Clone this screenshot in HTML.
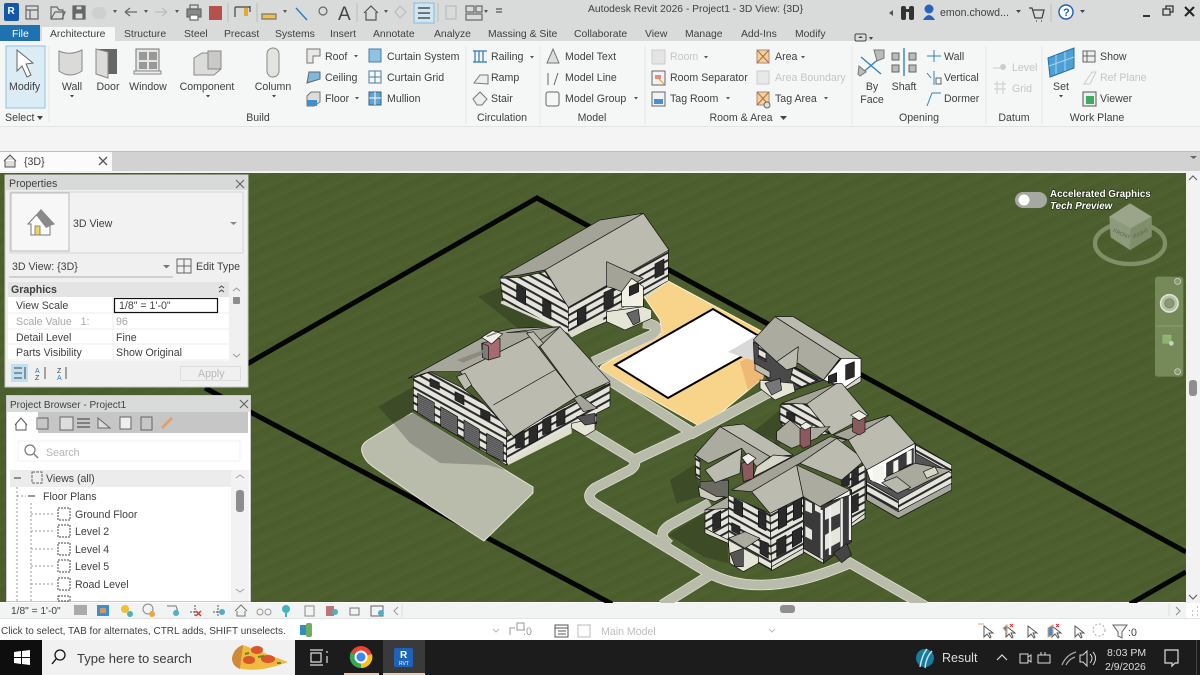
<!DOCTYPE html>
<html><head><meta charset="utf-8"><style>
html,body{margin:0;padding:0;width:1200px;height:675px;overflow:hidden;background:#fff}
svg{display:block;filter:blur(.3px)}
text{font-family:"Liberation Sans",sans-serif;font-size:10.6px;fill:#404040}
.g text,text.g{fill:#c4c6c6}
.ic{fill:none;stroke:#666;stroke-width:1.2}
</style></head><body>
<svg width="1200" height="675" viewBox="0 0 1200 675" xmlns="http://www.w3.org/2000/svg">
<defs>
<pattern id="sL" width="40" height="23" patternUnits="userSpaceOnUse" patternTransform="skewY(29)"><rect width="40" height="23" fill="#e4e4dc"/><rect width="40" height="7" fill="#2a2a2a"/></pattern>
<pattern id="sR" width="40" height="23" patternUnits="userSpaceOnUse" patternTransform="skewY(-29)"><rect width="40" height="23" fill="#e4e4dc"/><rect width="40" height="7" fill="#2a2a2a"/></pattern>
<pattern id="gd" width="6" height="6" patternUnits="userSpaceOnUse" patternTransform="skewY(29)"><rect width="6" height="6" fill="#4a4a4a"/><rect width="3" height="3" fill="#777"/><rect x="3" y="3" width="3" height="3" fill="#777"/></pattern>
<pattern id="gr" width="120" height="14" patternUnits="userSpaceOnUse" patternTransform="skewY(-24)"><rect width="120" height="14" fill="#4d5f2f"/><rect y="0" width="120" height="5" fill="#4b5d2d"/><rect y="10" width="120" height="2" fill="#4f6131"/></pattern>
<filter id="sc" color-interpolation-filters="sRGB"><feGaussianBlur stdDeviation=".35"/></filter>
</defs>

<!-- chrome backgrounds -->
<rect width="1200" height="41" fill="#d9dbdb"/>
<rect y="41" width="1200" height="85" fill="#f5f6f6"/>
<rect y="126" width="1200" height="25" fill="#f4f4f4"/>
<rect y="126" width="1200" height="1" fill="#e3e4e4"/>
<rect y="151" width="1200" height="21" fill="#d2d2d2"/>
<rect y="151" width="1200" height="1" fill="#bdbdbd"/>
<rect y="152" width="112" height="20" fill="#fbfbfb"/>

<!-- canvas -->
<rect y="172" width="1186" height="430" fill="url(#gr)"/>
<rect y="171" width="1200" height="2" fill="#f2f2f2"/>

<g filter="url(#sc)">
<!-- property line -->
<g fill="none" stroke="#050505" stroke-width="5">
<path d="M205 388 L537 198 L1186 552"/>
<path d="M205 388 L612 604"/>
<path d="M1130 604 L1186 572"/>
</g>

<!-- pad -->
<path d="M602 365 L662 333 L660 320 L645 298 L668 281 L763 332 L763 378 L706 425 Q700 427 694 423 L604 372 Q598 368 602 365Z" fill="#f7d48a" stroke="#fff3d0" stroke-width="1"/>
<path d="M740 362 L763 350 L763 378 L748 390Z" fill="#eeb877"/>
<path d="M615 365 L713 309 L757 335 L757 348 L668 398Z" fill="#fff" stroke="#000" stroke-width="2"/>
<path d="M728 352 L757 335 L775 340 L757 362Z" fill="#d9d9d9"/>

<!-- driveway and roads -->
<path d="M362 452 Q360 445 368 440 L412 413 L533 487 L533 493 L484 541 L430 506 L372 466 Q364 460 362 452Z" fill="#b9bbab" stroke="#e4e6d8" stroke-width="1"/>
<path d="M393 423 L413 413 L505 470 L488 465 L440 463 L410 443Z" fill="#939589"/>
<g fill="none" stroke="#e2e4d6" stroke-width="10.500">
<path d="M643 323 Q664 325 652 335 L593 362"/>
<path d="M590 368 L693 433 L770 392"/>
<path d="M582 428 L630 457 Q640 463 630 470 L595 488 Q583 497 597 505 L707 572 Q760 602 850 563 L925 606"/>
<path d="M630 462 L692 433"/>
<path d="M710 503 L670 525 Q655 535 670 545"/>
<path d="M710 575 L662 605"/>
</g>
<g fill="none" stroke="#babcab" stroke-width="9">
<path d="M643 323 Q664 325 652 335 L593 362"/>
<path d="M590 368 L693 433 L770 392"/>
<path d="M582 428 L630 457 Q640 463 630 470 L595 488 Q583 497 597 505 L707 572 Q760 602 850 563 L925 606"/>
<path d="M630 462 L692 433"/>
<path d="M710 503 L670 525 Q655 535 670 545"/>
<path d="M710 575 L662 605"/>
</g>

<!-- houses 1 and 2, crop coordinates -->
<g transform="translate(350 190) scale(.33333)" stroke="#111" stroke-width="2" stroke-linejoin="round">
<path d="M385 320 L455 290 L600 410 L510 420Z" fill="#3d4b26" stroke="none"/>
<path d="M85 650 L190 590 L190 665 L130 700Z" fill="#3d4b26" stroke="none"/>
<!-- house 1 -->
<path d="M450 265 L510 262 L585 245 L655 350 L655 430 L460 340Z" fill="url(#sL)"/>
<path d="M655 350 L955 180 L955 272 L880 315 L880 350 L770 365 L770 395 L665 440 L655 430Z" fill="url(#sR)"/>
<path d="M452 340 L655 430 L665 442 L760 395 L760 375 L880 350 L880 320 L955 272 L955 270 L900 318 L655 425 L455 332Z" fill="#dcdccb" stroke="none"/>
<path d="M450 262 L750 90 L880 70 L585 240 L510 255Z" fill="#a3a497"/>
<path d="M585 240 L880 70 L957 180 L655 352Z" fill="#bbbcaf"/>
<path d="M770 215 L880 265 L815 305 L790 295 L770 290Z" fill="#a3a497"/>
<path d="M815 305 L845 265 L880 290 L880 350 L815 350Z" fill="#f1f1e4"/>
<path d="M770 365 L880 350 L905 360 L905 385 L825 420 L770 395Z" fill="#e4e5d4"/>
<path d="M830 370 L865 358 L870 395 L850 405Z" fill="#666"/>
<path d="M500 285 L527 300 L527 345 L500 330ZM578 325 L603 340 L603 388 L578 375ZM682 360 L708 345 L708 390 L682 405ZM762 308 L790 295 L790 345 L762 358ZM838 290 L866 278 L866 305 L838 318ZM915 222 L942 207 L942 252 L915 265Z" fill="#2a2a2a"/>
<!-- house 2 -->
<path d="M190 565 L240 545 L330 590 L400 640 L470 710 L470 825 L190 660Z" fill="url(#sL)"/>
<path d="M470 740 L780 580 L780 650 L740 670 L740 700 L665 710 L470 825Z" fill="url(#sR)"/>
<path d="M470 815 L665 705 L665 730 L475 825Z" fill="#dedfce" stroke="none"/>
<path d="M203 610 L253 638 L253 700 L203 668ZM272 650 L323 680 L323 738 L272 708ZM342 690 L388 718 L388 778 L342 750ZM410 730 L460 758 L460 815 L410 790Z" fill="url(#gd)"/>
<path d="M240 565 L268 578 L268 600 L240 588ZM315 605 L342 618 L342 645 L315 630ZM392 655 L420 668 L420 692 L392 678ZM497 735 L523 722 L523 770 L497 775ZM537 715 L563 702 L563 750 L537 765ZM578 690 L603 677 L603 725 L578 735ZM620 668 L645 655 L645 700 L620 710Z" fill="#2a2a2a"/>
<path d="M175 565 L420 430 L490 415 L630 410 L575 470 L540 440 L330 545 L240 545Z" fill="#a6a79a"/>
<path d="M470 428 L630 410 L570 450 L530 425Z" fill="#abac9f"/>
<path d="M330 545 L540 440 L680 620 L490 740 Z" fill="#bbbcaf"/>
<path d="M430 645 L615 540" fill="none"/>
<path d="M570 470 L630 410 L780 575 L680 620Z" fill="#bbbcaf"/>
<path d="M320 560 L345 550 L365 585 L345 600Z" fill="#bbbcaf"/>
<path d="M530 430 L550 425 L580 460 L565 472Z" fill="#bbbcaf"/>
<path d="M672 625 L690 615 L742 655 L700 665Z" fill="#a3a497"/>
<path d="M665 700 L735 685 L735 720 L705 738 L665 715Z" fill="#e4e5d4"/>
<path d="M680 680 L735 670 L735 700 L705 705Z" fill="#555"/>
<path d="M395 460 L450 445 L450 500 L415 510 L397 500Z" fill="#a76b6f"/>
<path d="M397 460 L397 502 L415 510 L415 468Z" fill="#7d7c78"/>
<path d="M395 442 L428 422 L458 432 L425 462Z" fill="#efefe7"/>
<path d="M410 440 L440 428" stroke-width="4" stroke="#777"/>
<path d="M320 510 L400 480 L395 495 L340 518Z" fill="#8b8c80" stroke="none"/>
</g>

<!-- house 3,4,5 -->
<g transform="translate(660 300) scale(.33333)" stroke="#111" stroke-width="2" stroke-linejoin="round">
<path d="M280 395 L360 330 L390 410 L350 440 L340 420Z" fill="#3d4b26" stroke="none"/>
<path d="M30 540 L110 490 L120 590 L50 610Z" fill="#3d4b26" stroke="none"/>
<path d="M25 705 L130 640 L200 700 L205 790 L130 770Z" fill="#3d4b26" stroke="none"/>
<!-- house 3 -->
<path d="M280 125 L400 200 L490 240 L405 270 L345 262 L283 190Z" fill="#4a4a4a"/>
<path d="M285 190 L330 215 L330 235 L285 210Z" fill="#bcbcb0"/>
<path d="M295 135 L318 148 L318 185 L295 172ZM400 200 L475 240 L420 262 L390 240Z" fill="url(#sL)"/>
<path d="M490 240 L545 175 L603 175 L603 238 L560 265Z" fill="#fff"/>
<path d="M557 195 L583 185 L583 230 L557 240ZM505 228 L530 218 L530 245 L505 250Z" fill="#2a2a2a"/>
<path d="M555 262 L603 228 L603 245 L562 268Z" fill="#d6d7c8"/>
<path d="M300 240 L400 250 L405 275 L345 300 L300 265Z" fill="#e4e5d4"/>
<path d="M315 250 L360 235 L365 270 L335 285Z" fill="#777"/>
<path d="M280 120 L345 50 L540 175 L490 240 L415 190 L350 185 Z" fill="#abac9f"/>
<path d="M345 50 L400 50 L603 175 L540 175Z" fill="#bbbcaf"/>
<path d="M350 185 L415 140 L410 200 L380 210Z" fill="#bbbcaf"/>
<!-- house 4 -->
<path d="M360 315 L440 308 L510 400 L400 420 L360 365Z" fill="url(#sL)"/>
<path d="M380 335 L405 345 L405 365 L380 355Z" fill="#2a2a2a"/>
<path d="M365 310 L530 250 L445 312Z" fill="#a3a497"/>
<path d="M440 312 L530 250 L545 250 L625 345 L515 405Z" fill="#bbbcaf"/>
<path d="M350 395 L390 360 L420 385 L510 380 L470 415 L395 445 L350 420Z" fill="#abac9f"/>
<!-- left wing -->
<path d="M105 465 L120 480 L120 540 L108 530Z" fill="url(#sL)"/>
<path d="M120 545 L205 540 L205 590 L170 600 L120 570Z" fill="#6a6a62"/>
<path d="M180 380 L250 372 L400 465 L330 470Z" fill="#bbbcaf"/>
<path d="M105 465 L180 380 L330 470 L290 500 L245 445 L145 490Z" fill="#abac9f"/>
<path d="M135 510 L245 445 L240 520 L165 548Z" fill="#bbbcaf"/>
<path d="M290 500 L340 465 L395 470 L320 510 L280 530Z" fill="#d6d6c9"/>
<path d="M245 490 L280 480 L280 535 L250 545Z" fill="#8a5a5e"/>
<path d="M245 472 L265 460 L288 475 L262 495Z" fill="#efefe7"/>
<path d="M115 560 L170 590 L195 590 L165 605 L120 590Z" fill="#c9caba"/>
<!-- main house walls -->
<path d="M135 630 L205 590 L205 720 L135 685Z" fill="url(#sR)"/>
<path d="M135 685 L205 720 L205 730 L135 700Z" fill="#dbdccb"/>
<path d="M205 585 L330 640 L335 810 L205 740Z" fill="url(#sL)"/>
<path d="M330 640 L430 590 L430 750 L335 810Z" fill="url(#sR)"/>
<path d="M430 590 L575 570 L575 725 L490 790 L430 750Z" fill="#3a3a3a"/>
<path d="M436 600 L456 610 L456 640 L436 632ZM436 678 L456 690 L456 720 L436 710ZM495 625 L540 600 L540 640 L495 660ZM495 705 L540 680 L540 725 L495 750ZM465 612 L482 622 L482 640 L465 632Z" stroke="none" fill="#e6e6df"/>
<path d="M485 630 L485 785M510 620 L510 765M545 595 L545 745M570 585 L570 720" stroke="#eee" stroke-width="7" fill="none"/>
<path d="M540 540 L615 490 L615 640 L575 670 L575 570Z" fill="url(#sR)"/>
<path d="M222 595 L248 608 L248 652 L222 638ZM295 632 L318 644 L318 692 L295 680ZM355 628 L380 615 L380 675 L355 688ZM400 605 L425 592 L425 650 L400 662ZM158 645 L182 632 L182 680 L158 692ZM300 720 L325 730 L325 775 L300 760ZM350 720 L378 705 L378 755 L350 770ZM397 695 L425 680 L425 725 L397 742ZM215 668 L240 680 L240 705 L215 692ZM545 520 L568 505 L568 555 L545 560ZM575 510 L595 498 L595 550 L575 560ZM575 590 L595 580 L595 630 L575 640Z" fill="#2a2a2a"/>
<path d="M335 800 L430 745 L430 760 L335 812ZM430 745 L490 780 L490 790 L430 755ZM575 670 L615 640 L615 655 L575 680Z" fill="#dbdccb"/>
<path d="M205 720 L295 770 L295 790 L250 815 L210 790Z" fill="#e4e5d4"/>
<path d="M205 715 L255 695 L300 715 L255 745Z" fill="#abac9f"/>
<path d="M210 760 L250 745 L250 800 L225 800Z" fill="#555"/>
<path d="M520 760 L560 730 L575 765 L545 788Z" fill="#444"/>
<path d="M135 630 L205 590 L205 625Z" fill="#abac9f"/>
<!-- main roofs -->
<path d="M215 570 L510 410 L560 420 L420 490 L275 575Z" fill="#a3a497"/>
<path d="M275 575 L410 495 L430 590 L330 640Z" fill="#bbbcaf"/>
<path d="M410 495 L570 570 L480 620 L430 590Z" fill="#abac9f"/>
<path d="M500 610 L570 570 L570 585 L510 605Z" fill="#f4f4ee"/>
<path d="M420 490 L530 415 L615 480 L545 540Z" fill="#bbbcaf"/>
<path d="M565 420 L690 345 L765 430 L620 510Z" fill="#bbbcaf"/>
<path d="M520 405 L590 375 L690 345 L565 420Z" fill="#a3a497"/>
<!-- chimneys -->
<path d="M420 385 L452 378 L452 435 L430 445 L420 435Z" fill="#8a5a5e"/>
<path d="M420 378 L438 366 L458 378 L435 390Z" fill="#efefe7"/>
<path d="M578 355 L615 350 L615 395 L598 405 L578 395Z" fill="#8a5a5e"/>
<path d="M572 345 L597 332 L622 348 L597 362Z" fill="#efefe7"/>
<!-- deck -->
<path d="M620 510 L765 430 L875 495 L875 570 L715 655 L620 600Z" fill="#555"/>
<path d="M620 545 L715 600 L875 510 L875 570 L715 655 L620 600Z" fill="url(#sR)"/>
<path d="M620 545 L715 600 L715 655 L620 600Z" fill="url(#sL)"/>
<path d="M767 435 L875 495 L875 520 L767 460Z" fill="url(#sL)"/>
<path d="M620 510 L765 430 L765 490 L715 578 L630 540Z" fill="#fff"/>
<path d="M680 490 L760 445 L760 490 L680 530Z" fill="#3a3a3a"/>
<path d="M700 485 L715 478 L715 520 L700 525ZM740 455 L755 450 L755 490 L740 495ZM638 505 L672 495 L672 540 L638 545Z" fill="#f4f4ee" stroke="none"/>
<path d="M680 530 L765 490 L875 510 L800 545 L750 570 L672 540Z" fill="#aaa99e"/>
<path d="M665 548 L710 530 L752 562 L712 580Z" fill="#b8b9ad"/>
<path d="M790 515 L825 500 L835 520 L800 535Z" fill="#d7d7c6"/>
<path d="M620 600 L715 655 L875 570 L875 550 L715 635 L620 580Z" fill="#a7a89c"/>
</g>
</g>

<!-- view cube etc -->
<g transform="translate(980 160) scale(.33333)">
<ellipse cx="450" cy="250" rx="105" ry="62" fill="none" stroke="#7f9066" stroke-width="13"/>
<path d="M388 170 L450 130 L515 170 L515 230 L450 270 L392 232Z" fill="#8d9a7b"/>
<path d="M388 170 L450 130 L515 170 L452 205Z" fill="#9aa58a"/>
<path d="M452 205 L515 170 L515 230 L450 270Z" fill="#808e6c"/>
<text x="398" y="215" style="font-size:16px;fill:#5c6a49" transform="rotate(25 398 215)">FRONT</text>
<text x="462" y="235" style="font-size:16px;fill:#5c6a49" transform="rotate(-25 462 235)">RIGHT</text>
<path d="M525 360 Q525 350 535 350 L600 350 Q610 350 610 360 L610 640 Q610 650 600 650 L535 650 Q525 650 525 640Z" fill="#768958"/>
<path d="M527 498 L608 498" stroke="#8d9e74" stroke-width="3"/>
<circle cx="568" cy="430" r="26" fill="#b6bfa8" stroke="#dfe3d6" stroke-width="5"/>
<circle cx="568" cy="430" r="14" fill="#8a9a72" stroke="#6d7d58" stroke-width="2"/>
<rect x="548" y="525" width="25" height="25" fill="#90b470" stroke="#a8c294"/>
<circle cx="574" cy="550" r="7" fill="#c7d7b7"/>
<circle cx="593" cy="364" r="9" fill="#8a9a72" stroke="#e0e0d4" stroke-width="2"/>
<circle cx="593" cy="635" r="9" fill="#8a9a72" stroke="#e0e0d4" stroke-width="2"/>
</g>
<rect x="1015" y="192" width="32" height="16" rx="8" fill="#a5a8a3"/>
<circle cx="1024" cy="200" r="5.5" fill="#fff"/>
<g stroke="#263015" stroke-width="1.4"><text x="1050" y="197" style="font-size:9.8px;font-weight:bold;fill:#fff;paint-order:stroke">Accelerated Graphics</text>
<text x="1050" y="209" style="font-size:9.8px;font-weight:bold;font-style:italic;fill:#fff;paint-order:stroke">Tech Preview</text></g>

<!-- right scrollbar -->
<rect x="1186" y="172" width="14" height="431" fill="#f2f2f2"/>
<path d="M1189 180 L1193 176 L1197 180" class="ic" stroke-width="1"/>
<path d="M1189 595 L1193 599 L1197 595" class="ic"/>
<rect x="1189" y="380" width="8" height="16" rx="3" fill="#8f8f8f"/>

<!-- title bar -->
<rect x="4" y="3" width="15" height="18" rx="2" fill="#1257a8"/>
<text x="7.5" y="14" style="font-size:10px;font-weight:bold;fill:#fff">R</text>
<g class="ic" fill="none" stroke="#555">
<rect x="26" y="6" width="12" height="13"/><path d="M26 10 H38M30 10 V19"/>
<path d="M51 19 L51 7 H57 L59 10 H63 V19Z M51 19 L55 12 H65 L62 19"/>
<rect x="73" y="6" width="12" height="13" fill="#666"/><rect x="76" y="6" width="6" height="4" fill="#ddd"/><rect x="75" y="13" width="8" height="6" fill="#ddd"/>
<path d="M125 12 H137 M125 12 L130 8 M125 12 L130 16" />
<path d="M155 12 H167 M167 12 L162 8 M167 12 L162 16" stroke="#bbb"/>
<rect x="187" y="9" width="14" height="8" fill="#888"/><rect x="190" y="5" width="8" height="4"/><rect x="190" y="15" width="8" height="5" fill="#fff"/>
<path d="M235 7 V17 M235 7 H250 M250 6 V12" stroke="#444"/>
<path d="M262 14 H276 V19 H262Z" fill="#f0c040" stroke="#777"/>
<path d="M296 8 L307 20" stroke="#2d80c0" stroke-width="1.5"/>
<circle cx="323" cy="11" r="4"/>
<path d="M364 13 L371 6 L378 13 M366 12 V20 H376 V12" stroke="#555"/>
<path d="M400 6 L406 12 L400 18 L395 12Z" stroke="#bbb"/>
<rect x="414" y="3" width="20" height="20" fill="#cfe5f2" stroke="#8fc3df"/>
<path d="M418 8 H430 M418 13 H430 M418 18 H430" stroke="#333"/>
<rect x="446" y="6" width="10" height="13" stroke="#bbb"/>
<rect x="466" y="6" width="8" height="6"/><rect x="476" y="6" width="6" height="6"/><rect x="466" y="14" width="16" height="6"/>
<path d="M496 9 H502 M496 12 H502" stroke="#555"/>
</g>
<rect x="209" y="6" width="13" height="14" fill="#b5524e"/>
<rect x="244" y="8" width="4" height="8" fill="#e6a82c"/>
<rect x="92" y="7" width="14" height="12" rx="5" fill="#cfcfcf"/>
<text x="338" y="20" style="font-size:19px;fill:#444">A</text>
<path d="M113 10 l4 0 l-2 3z M144 10 l4 0 l-2 3z M175 10 l4 0 l-2 3z M283 10 l4 0 l-2 3z M384 10 l4 0 l-2 3z M484 10 l4 0 l-2 3z" fill="#555"/>
<path d="M228 3 V22 M257 3 V22 M357 3 V22 M438 3 V22" stroke="#bbb"/>
<text x="588" y="12" style="font-size:10.3px">Autodesk Revit 2026 - Project1 - 3D View: {3D}</text>
<path d="M893 10 L889 13 L893 16Z" fill="#555"/>
<g fill="#333"><rect x="901" y="6" width="5" height="14" rx="2"/><rect x="909" y="6" width="5" height="14" rx="2"/><rect x="905" y="9" width="5" height="3"/></g>
<circle cx="929" cy="9" r="4.5" fill="#2b63b8"/><path d="M923 20 Q929 10 935 20Z" fill="#2b63b8"/>
<text x="940" y="16">emon.chowd...</text>
<path d="M1016 10 l5 0 l-2.5 3z M1080 10 l5 0 l-2.5 3z" fill="#444"/>
<path d="M1029 8 H1032 L1035 18 H1042 L1044 10 H1033 M1036 21 h1 M1041 21 h1" fill="none" stroke="#444" stroke-width="1.3"/>
<circle cx="1066" cy="12" r="7" fill="#fff" stroke="#1e5fb4" stroke-width="1.4"/>
<text x="1063" y="16" style="font-size:11px;font-weight:bold;fill:#1e5fb4">?</text>
<path d="M1051 4 V22" stroke="#bbb"/>
<rect x="1143" y="15" width="7" height="2" fill="#333"/>
<path d="M1163 9 H1170 V15 H1163Z M1166 9 V6 H1173 V12 H1170" fill="none" stroke="#333" stroke-width="1.3"/>
<path d="M1185 7 L1194 16 M1194 7 L1185 16" stroke="#222" stroke-width="2"/>

<!-- tabs -->
<rect x="0" y="25" width="40" height="16" fill="#1f71b0"/>
<text x="12" y="37" style="fill:#fff;font-size:10.4px">File</text>
<rect x="42" y="27" width="73" height="15" fill="#f5f6f6"/>
<text x="50" y="37" style="font-size:10.4px">Architecture</text><text x="124" y="37" style="font-size:10.4px">Structure</text><text x="184" y="37" style="font-size:10.4px">Steel</text><text x="224" y="37" style="font-size:10.4px">Precast</text><text x="275" y="37" style="font-size:10.4px">Systems</text><text x="330" y="37" style="font-size:10.4px">Insert</text><text x="373" y="37" style="font-size:10.4px">Annotate</text><text x="434" y="37" style="font-size:10.4px">Analyze</text><text x="488" y="37" style="font-size:10.4px">Massing &amp; Site</text><text x="574" y="37" style="font-size:10.4px">Collaborate</text><text x="645" y="37" style="font-size:10.4px">View</text><text x="685" y="37" style="font-size:10.4px">Manage</text><text x="741" y="37" style="font-size:10.4px">Add-Ins</text><text x="795" y="37" style="font-size:10.4px">Modify</text>
<rect x="855" y="34" width="11" height="7" rx="1.5" fill="none" stroke="#444"/><path d="M858 38 h5 l-2.5 -2z M869 37 l4 0 l-2 3z" fill="#444"/>

<!-- ribbon separators -->
<path d="M49 46 V122 M466 46 V125 M540 46 V125 M645 46 V125 M852 46 V125 M986 46 V125 M1042 46 V125" stroke="#e6e7e7"/>
<rect x="6" y="46" width="39" height="62" fill="#dcecf5" stroke="#8fc3df"/>
<path d="M17 50 L17 71 L22 66 L27 77 L31 75 L26 64 L33 63Z" fill="#fdfdfd" stroke="#666"/>
<!-- big buttons -->
<path d="M59 51 Q70 56 82 50 V71 Q70 79 59 71Z" fill="#dadbd7" stroke="#888"/>
<path d="M97 49 H117 V74 H97Z" fill="#666"/><path d="M96 49 L108 52 V78 L96 74Z" fill="#dcdcd8" stroke="#888"/>
<rect x="136" y="49" width="23" height="22" fill="#e5e5e2" stroke="#777"/><rect x="139" y="52" width="8" height="8" fill="#999"/><rect x="149" y="52" width="8" height="8" fill="#999"/><rect x="139" y="62" width="8" height="7" fill="#999"/><rect x="149" y="62" width="8" height="7" fill="#999"/><rect x="134" y="71" width="27" height="3" fill="#eee" stroke="#888"/>
<path d="M194 58 L202 53 H221 V69 L214 75 H194Z" fill="#dcdcd8" stroke="#888"/><path d="M208 51 H221 V69 H208Z" fill="#c9c9c5" stroke="#888"/>
<rect x="267" y="48" width="12" height="29" rx="6" fill="#e3e3e0" stroke="#888"/>
<text x="9" y="90">Modify</text>
<g text-anchor="middle"><text x="72" y="90">Wall</text><text x="108" y="90">Door</text><text x="148" y="90">Window</text><text x="207" y="90">Component</text><text x="273" y="90">Column</text><text x="872" y="90">By</text><text x="872" y="103">Face</text><text x="904" y="90">Shaft</text><text x="1061" y="90">Set</text></g>
<path d="M70 95 h4 l-2 2.5z M206 95 h4 l-2 2.5z M272 95 h4 l-2 2.5z M1059 95 h4 l-2 2.5z" fill="#444"/>
<!-- labels -->
<text x="325" y="60">Roof</text><text x="325" y="81">Ceiling</text><text x="325" y="102">Floor</text>
<text x="387" y="60">Curtain System</text><text x="387" y="81">Curtain Grid</text><text x="387" y="102">Mullion</text>
<text x="491" y="60">Railing</text><text x="491" y="81">Ramp</text><text x="491" y="102">Stair</text>
<text x="565" y="60">Model Text</text><text x="565" y="81">Model Line</text><text x="565" y="102">Model Group</text>
<text x="670" y="60" class="g">Room</text><text x="670" y="81">Room Separator</text><text x="670" y="102">Tag Room</text>
<text x="775" y="60">Area</text><text x="775" y="81" class="g">Area Boundary</text><text x="775" y="102">Tag Area</text>
<text x="944" y="60">Wall</text><text x="944" y="81">Vertical</text><text x="944" y="102">Dormer</text>
<text x="1012" y="71" class="g">Level</text><text x="1012" y="92" class="g">Grid</text>
<text x="1100" y="60">Show</text><text x="1100" y="81" class="g">Ref Plane</text><text x="1100" y="102">Viewer</text>
<path d="M354 55 h4 l-2 2.5z M355 97 h4 l-2 2.5z M530 56 h4 l-2 2.5z M634 97 h4 l-2 2.5z M704 56 h4 l-2 2.5z M726 97 h4 l-2 2.5z M801 56 h4 l-2 2.5z M824 97 h4 l-2 2.5z" fill="#555"/>
<!-- small icons -->
<path d="M307 63 V49 H320 L320 56 H313 V63Z" fill="#e8e8e4" stroke="#777"/>
<path d="M307 83 L309 72 H320 V79Z" fill="#7fb8de" stroke="#666"/>
<path d="M307 106 V96 L311 92 H320 V102 L314 106Z" fill="#dcdcd8" stroke="#777"/><rect x="307" y="100" width="10" height="6" fill="#3f8fd0"/>
<rect x="369" y="49" width="12" height="13" fill="#8fc2e3" stroke="#4d7ea0"/>
<path d="M369 71 H381 V83 H369Z M375 71 V83 M369 77 H381" fill="none" stroke="#4d7ea0"/>
<rect x="369" y="92" width="12" height="13" fill="#5fa6d6" stroke="#335f80"/><path d="M375 92 V105 M369 98 H381" stroke="#fff"/>
<path d="M473 51 H487 M475 51 V62 M479 51 V62 M483 51 V62 M473 62 H487" stroke="#2e78b8" stroke-width="1.2" fill="none"/>
<path d="M474 83 L480 75 H488 V84Z" fill="#eee" stroke="#777"/>
<path d="M473 99 L480 92 L487 99 L482 105 H477Z" fill="#eee" stroke="#777"/>
<path d="M547 63 L553 49 L559 63Z" fill="#ddd" stroke="#777"/>
<path d="M548 73 V85 M558 73 L554 85" stroke="#666" fill="none"/>
<rect x="546" y="92" width="13" height="14" rx="2" fill="none" stroke="#666"/>
<rect x="652" y="50" width="13" height="14" fill="#e4e4e4" stroke="#ccc"/>
<rect x="652" y="71" width="13" height="14" fill="#f2f2f2" stroke="#666"/><path d="M655 75 h6 v4 h-6z" fill="#e88"/><path d="M658 78 l6 6" stroke="#e8a020"/>
<rect x="652" y="92" width="13" height="14" fill="#f2f2f2" stroke="#666"/><rect x="654" y="99" width="9" height="5" fill="#4a90c8"/>
<rect x="757" y="50" width="12" height="13" fill="#f6d28d" stroke="#a88"/><path d="M757 50 L769 63 M769 50 L757 63" stroke="#a66"/>
<rect x="757" y="71" width="12" height="13" fill="#e8e8e8" stroke="#ccc"/>
<rect x="757" y="92" width="12" height="13" fill="#f6d28d" stroke="#a88"/><path d="M757 92 L769 105 M769 92 L757 105" stroke="#a66"/><circle cx="767" cy="105" r="3" fill="#ddd" stroke="#666"/>
<path d="M861 57 L881 74 M861 74 L881 57" stroke="#2e85c0" stroke-width="1.4"/>
<path d="M859 66 L866 72 L860 76 L858 74Z M874 50 L884 50 L884 58 L877 61Z" fill="#bbb" stroke="#777"/>
<path d="M904 48 V76" stroke="#2e85c0" stroke-width="1.4"/>
<g fill="#bbb" stroke="#666"><rect x="892" y="53" width="7" height="7"/><rect x="909" y="53" width="7" height="7"/><rect x="892" y="65" width="7" height="7"/><rect x="909" y="65" width="7" height="7"/></g>
<path d="M927 56 H941 M934 50 V62" stroke="#2e85c0" fill="none"/>
<path d="M927 73 L931 78 M934 71 V85" stroke="#2e85c0" fill="none"/><rect x="936" y="78" width="5" height="6" fill="none" stroke="#666"/>
<path d="M927 106 L932 93 H941" stroke="#2e85c0" fill="none"/>
<path d="M993 68 H1000" stroke="#ccc"/><circle cx="1003" cy="67" r="3" fill="#ccc"/>
<path d="M994 84 H1006 M994 89 H1006 M997 81 V94 M1003 81 V94" stroke="#ccc" fill="none"/>
<path d="M1048 58 L1074 48 V68 L1050 77Z" fill="#4da0d6" stroke="#2970a0"/>
<path d="M1056 55 V74 M1065 52 V71 M1049 66 L1074 57" stroke="#a6d3ee" fill="none"/>
<path d="M1083 51 H1095 V62 H1083Z M1087 51 V62 M1083 56 H1095" fill="#eee" stroke="#666"/>
<path d="M1084 84 L1092 72 H1096 L1090 84Z" fill="none" stroke="#ccc"/>
<rect x="1083" y="92" width="13" height="14" fill="#eee" stroke="#555"/><rect x="1086" y="96" width="8" height="8" fill="#3faa60"/>
<!-- panel labels -->
<text x="5" y="121">Select</text><path d="M37 116 h6 l-3 4z" fill="#444"/>
<g text-anchor="middle"><text x="258" y="121">Build</text><text x="502" y="121">Circulation</text><text x="592" y="121">Model</text><text x="741" y="121">Room &amp; Area</text><text x="919" y="121">Opening</text><text x="1014" y="121">Datum</text><text x="1097" y="121">Work Plane</text></g>
<path d="M780 116 h7 l-3.5 4z" fill="#444"/>
<path d="M1190 156 h7 l-3.5 3z" fill="#666"/>

<!-- view tab -->
<path d="M4 161 L10 155 L16 161 M5 160 V167 H15 V160" fill="#ddd" stroke="#555"/>
<text x="24" y="165">{3D}</text>
<path d="M99 157 L107 165 M107 157 L99 165" stroke="#555" stroke-width="1.3"/>

<!-- properties -->
<rect x="5" y="175" width="243" height="212" fill="#f0f0f0" stroke="#c9c9c9"/>
<rect x="6" y="176" width="241" height="14" fill="#d8dada"/>
<text x="9" y="187">Properties</text>
<path d="M236 180 L244 188 M244 180 L236 188" stroke="#666" stroke-width="1.2"/>
<rect x="10" y="192" width="233" height="61" fill="#f2f2f2" stroke="#d5d5d5"/>
<rect x="11" y="193" width="58" height="58" fill="#f7f7f7" stroke="#bbb"/>
<path d="M28 224 L41 210 L54 224 L50 225 L50 235 L31 235 L31 224Z" fill="#fff" stroke="#777"/>
<path d="M41 209 L54 224 L46 228 L36 215Z" fill="#8a8a8a"/>
<rect x="35" y="226" width="5" height="9" fill="#eed552" stroke="#888"/>
<text x="73" y="227">3D View</text>
<path d="M230 222 h7 l-3.5 3z" fill="#888"/>
<text x="12" y="270">3D View: {3D}</text>
<path d="M163 265 h7 l-3.5 3.5z" fill="#777"/>
<rect x="9" y="276" width="164" height="2" fill="#d0d0d0"/>
<rect x="177" y="259" width="14" height="14" fill="none" stroke="#666"/><path d="M184 259 V273 M177 266 H191" stroke="#666"/>
<text x="196" y="270">Edit Type</text>
<rect x="8" y="282" width="221" height="15" fill="#e4e4e4"/>
<text x="11" y="293" style="font-weight:bold">Graphics</text>
<path d="M219 288 l2.5 -2 l2.5 2 M219 292 l2.5 -2 l2.5 2" fill="none" stroke="#444"/>
<rect x="8" y="297" width="221" height="64" fill="#fff"/>
<path d="M8 313 H229 M8 329 H229 M8 344 H229 M8 360 H229 M113 297 V361" stroke="#ececec"/>
<rect x="114.500" y="298.500" width="103" height="14" fill="#fff" stroke="#111" stroke-width="1.2"/>
<text x="16" y="309">View Scale</text><text x="119" y="309">1/8" = 1'-0"</text>
<text x="16" y="325" style="fill:#a8a8a8">Scale Value&#160;&#160;&#160;1:</text><text x="116" y="325" style="fill:#a8a8a8">96</text>
<text x="16" y="341">Detail Level</text><text x="116" y="341">Fine</text>
<text x="16" y="356">Parts Visibility</text><text x="116" y="356">Show Original</text>
<path d="M233 291 l3.500 -3 l3.500 3 M233 354 l3.500 3 l3.500 -3" fill="none" stroke="#999"/>
<rect x="233" y="297" width="7" height="7" rx="1" fill="#8d8d8d"/>
<rect x="11" y="364" width="17" height="18" fill="#bfe0f0"/>
<path d="M14 368 H22 M14 373 H22 M14 378 H22 M25 367 V379" stroke="#444"/>
<text x="35" y="373" style="font-size:7px;fill:#2e78b8">A</text><text x="35" y="380" style="font-size:7px">Z</text><path d="M45 367 V379" stroke="#555"/>
<text x="57" y="373" style="font-size:7px">Z</text><text x="57" y="380" style="font-size:7px;fill:#2e78b8">A</text><path d="M66 367 V379" stroke="#555"/>
<rect x="180.500" y="366.500" width="60" height="14" rx="1" fill="#f0f0f0" stroke="#dcdcdc"/>
<text x="198" y="377" style="fill:#b9b9b9">Apply</text>

<!-- browser -->
<rect x="6.500" y="395.500" width="244" height="206" fill="#fff" stroke="#c9c9c9"/>
<rect x="7" y="396" width="243" height="16" fill="#d9dbdb"/>
<text x="10" y="408" style="font-size:10px">Project Browser - Project1</text>
<path d="M240 400 L248 408 M248 400 L240 408" stroke="#666" stroke-width="1.2"/>
<rect x="38" y="412" width="210" height="21" fill="#c6c6c6"/>
<path d="M15 425 L21 418 L27 425 M16 424 V430 H26 V424" fill="#fff" stroke="#555"/>
<g fill="none" stroke="#666"><rect x="37" y="418" width="11" height="11"/><rect x="60" y="417" width="13" height="13" fill="#ddd"/><path d="M77 419 H90 M77 423 H90 M77 427 H90" stroke-width="1.5"/><path d="M98 418 L110 428 H98Z" fill="#ddd"/><rect x="120" y="417" width="11" height="12" fill="#eee"/><rect x="141" y="417" width="11" height="13"/></g>
<path d="M162 428 L172 418" stroke="#e4a06a" stroke-width="3"/>
<rect x="18" y="441" width="222" height="20" rx="1" fill="#fff" stroke="#f1f1f1"/>
<circle cx="30" cy="450" r="5" fill="none" stroke="#777" stroke-width="1.2"/><path d="M34 454 L38 458" stroke="#777" stroke-width="1.3"/>
<text x="46" y="456" style="fill:#b5b5b5">Search</text>
<rect x="10" y="470" width="221" height="17" fill="#ececec"/>
<rect x="231" y="470" width="18" height="131" fill="#f2f2f2"/>
<path d="M236 478 l4 -3 l4 3 M236 589 l4 3 l4 -3" fill="none" stroke="#a5a5a5"/>
<rect x="236" y="490" width="8" height="22" rx="3" fill="#8d8d8d"/>
<path d="M14 478 H21 M28 496 H35" stroke="#333"/>
<rect x="32" y="472" width="10" height="11" fill="#eee" stroke="#666" stroke-dasharray="3 1"/>
<text x="46" y="482">Views (all)</text>
<text x="43" y="500">Floor Plans</text>
<path d="M17 487 V601 M31 503 V601 M17 496 H26 M31 514 H53 M31 531 H53 M31 549 H53 M31 566 H53 M31 584 H53" stroke="#999" stroke-dasharray="2 2" fill="none"/>
<g fill="#fff" stroke="#444" stroke-dasharray="2 1"><rect x="58" y="508" width="12" height="12"/><rect x="58" y="525" width="12" height="12"/><rect x="58" y="543" width="12" height="12"/><rect x="58" y="560" width="12" height="12"/><rect x="58" y="578" width="12" height="12"/><rect x="58" y="596" width="12" height="5"/></g>
<text x="75" y="518">Ground Floor</text><text x="75" y="535">Level 2</text><text x="75" y="553">Level 4</text><text x="75" y="570">Level 5</text><text x="75" y="588">Road Level</text>

<!-- bottom view bar -->
<rect y="603" width="1186" height="15" fill="#f2f3f3"/>
<path d="M402 603 V617 M1169 604 V616" stroke="#dcdcdc"/>
<text x="11" y="614" style="font-size:10.2px">1/8" = 1'-0"</text>
<g>
<rect x="74" y="605" width="13" height="10" fill="#aaa"/>
<rect x="97" y="605" width="12" height="11" fill="#3e8fd0"/><rect x="100" y="608" width="6" height="5" fill="#c96"/>
<circle cx="125" cy="609" r="4" fill="#f0c030"/><circle cx="130" cy="614" r="3" fill="#4fb0c0"/>
<circle cx="148" cy="609" r="5" fill="none" stroke="#888"/><circle cx="152" cy="614" r="3" fill="#e9a93a"/>
<path d="M167 606 L176 606 L178 612" stroke="#777" fill="none"/><circle cx="176" cy="613" r="3" fill="#4fb0c0"/>
<path d="M195 605 V616 M190 612 H200" stroke="#555" stroke-dasharray="2 1"/><path d="M196 611 L201 616 M201 611 L196 616" stroke="#d33" stroke-width="1.4"/>
<path d="M218 605 V616 M213 612 H222" stroke="#555" stroke-dasharray="2 1"/><circle cx="222" cy="612" r="3" fill="#4fb0c0"/>
<path d="M235 611 L241 605 L247 611 M237 611 V616 H245 V611" fill="none" stroke="#777"/>
<circle cx="260" cy="612" r="3" fill="none" stroke="#999"/><circle cx="268" cy="612" r="3" fill="none" stroke="#999"/>
<circle cx="286" cy="609" r="4" fill="#3fb5c0"/><rect x="285" y="613" width="2" height="4" fill="#3fb5c0"/>
<rect x="305" y="606" width="9" height="10" fill="none" stroke="#888"/>
<rect x="326" y="606" width="8" height="10" fill="#b77"/><circle cx="335" cy="612" r="3" fill="#4fb0c0"/>
<rect x="350" y="608" width="9" height="7" fill="none" stroke="#777"/>
<rect x="371" y="606" width="12" height="10" fill="none" stroke="#666"/><circle cx="381" cy="613" r="3" fill="#4fb0c0"/>
<path d="M398 607 L394 611 L398 615" fill="none" stroke="#999"/>
</g>
<rect x="780" y="605" width="15" height="8" rx="3" fill="#8f8f8f"/>
<path d="M1176 607 L1180 611 L1176 615" fill="none" stroke="#888"/>
<path d="M1192 611 h1 M1197 611 h1 M1197 607 h1 M1192 615 h1 M1197 615 h1" stroke="#888"/>

<!-- status bar -->
<rect y="618" width="1200" height="22" fill="#fff"/>
<rect y="618" width="1200" height="1" fill="#e4e4e4"/>
<text x="1" y="634" style="font-size:10px">Click to select, TAB for alternates, CTRL adds, SHIFT unselects.</text>
<rect x="300" y="625" width="6" height="10" fill="#2f8fbf"/><rect x="306" y="623" width="6" height="14" rx="2" fill="#6fae5e"/>
<path d="M493 629 l3 3 l3 -3" fill="none" stroke="#bbb"/>
<path d="M510 635 V628 H515 M517 623 H524 V630 H517Z" fill="none" stroke="#999"/><text x="523" y="635" style="fill:#999">:0</text>
<rect x="555" y="625" width="13" height="12" fill="#fff" stroke="#555"/><path d="M555 628 H568 M558 631 H566 M558 634 H566" stroke="#555"/>
<rect x="578" y="625" width="12" height="12" fill="#fff" stroke="#bbb"/>
<text x="601" y="635" style="fill:#bdbdbd">Main Model</text>
<path d="M769 629 l3 3 l3 -3" fill="none" stroke="#bbb"/>
<g fill="#fff" stroke="#555"><path d="M984 626 L984 637 L987 634 L990 638 L991 637 L989 633 L993 633Z"/><path d="M1006 626 L1006 637 L1009 634 L1012 638 L1013 637 L1011 633 L1015 633Z"/><path d="M1028 626 L1028 637 L1031 634 L1034 638 L1035 637 L1033 633 L1037 633Z"/><path d="M1052 626 L1052 637 L1055 634 L1058 638 L1059 637 L1057 633 L1061 633Z"/><path d="M1075 626 L1075 637 L1078 634 L1081 638 L1082 637 L1080 633 L1084 633Z"/></g>
<path d="M978 624 h6 M1003 628 l4 -3 v8z M1048 628 l5 -3 v10 l-5 2z" fill="#3e8fd0" stroke="#e4a06a"/>
<path d="M1010 624 l3 3 M1013 624 l-3 3 M1056 624 l3 3 M1059 624 l-3 3" stroke="#d33" stroke-width="1.2"/>
<circle cx="1099" cy="630" r="6" fill="none" stroke="#aaa" stroke-dasharray="2 2"/>
<path d="M1113 625 H1127 L1122 632 V638 L1118 636 V632Z" fill="#f2f2f2" stroke="#666"/>
<text x="1128" y="636">:0</text>

<!-- taskbar -->
<rect y="640" width="1200" height="35" fill="#1c1c1c"/>
<rect y="640" width="42" height="35" fill="#0e0e0e"/>
<path d="M14 652 L21 651 V657 H14Z M22 651 L30 650 V657 H22Z M14 658 H21 V664 L14 663Z M22 658 H30 V665 L22 664Z" fill="#fff"/>
<rect x="42" y="640" width="253" height="35" fill="#f1f1f1"/>
<circle cx="60" cy="655" r="5" fill="none" stroke="#111" stroke-width="1.3"/><path d="M56 659 L52 664" stroke="#111" stroke-width="1.4"/>
<text x="77" y="663" style="font-size:13px;fill:#3a3a3a">Type here to search</text>
<path d="M232 658 Q234 648 243 645 L288 662 Q262 672 242 669 Q232 666 232 658Z" fill="#f0b93f"/>
<path d="M232 658 Q234 648 243 645 L240 669 Q232 666 232 658Z" fill="#d08a3a"/>
<ellipse cx="257" cy="650" rx="6" ry="4" fill="#d9552b"/><ellipse cx="249" cy="660" rx="6" ry="4" fill="#d9552b"/><ellipse cx="268" cy="659" rx="7" ry="4" fill="#d9552b"/><path d="M258 657 l6 -1 M245 654 l4 -1 M277 663 l4 0" stroke="#5a8a2a" stroke-width="2"/>
<path d="M310 650 H323 M310 665 H323 M311 653 H321 V662 H311Z M327 651 V653 M327 656 V663" fill="none" stroke="#ddd" stroke-width="1.2"/>
<circle cx="361" cy="657" r="11" fill="#ea4335"/>
<path d="M361 668 A11 11 0 0 1 351 652 L356 655 L366 660Z" fill="#34a853"/>
<path d="M361 657 L372 654 A11 11 0 0 1 361 668Z" fill="#fbc116"/>
<circle cx="361" cy="657" r="5.500" fill="#4285f4" stroke="#fff" stroke-width="2"/>
<rect x="383" y="640" width="42" height="35" fill="#3a3a3a"/>
<rect x="394" y="648" width="19" height="19" rx="2" fill="#1d63b8"/>
<text x="400" y="658" style="font-size:10px;font-weight:bold;fill:#fff">R</text>
<text x="399" y="665" style="font-size:5px;fill:#fff">RVT</text>
<rect x="344" y="673" width="35" height="2" fill="#f0c8a8"/>
<rect x="383" y="673" width="42" height="2" fill="#f0c8a8"/>
<circle cx="925" cy="658" r="9" fill="#1a7a9a"/>
<path d="M920 667 Q922 655 927 649 M925 668 Q926 657 932 651" stroke="#bfe6f2" stroke-width="1.5" fill="none"/>
<text x="942" y="662" style="font-size:12.5px;fill:#ddd">Result</text>
<path d="M997 660 L1002 655 L1007 660" fill="none" stroke="#ddd" stroke-width="1.2"/>
<path d="M1020 654 H1028 V663 H1020Z M1028 657 L1031 655 V662 L1028 660" fill="none" stroke="#ddd"/>
<path d="M1038 655 H1050 V663 H1038Z M1041 655 V652 M1045 655 V652" fill="none" stroke="#ddd"/>
<path d="M1062 665 Q1066 655 1076 652 M1066 665 Q1069 659 1075 657" fill="none" stroke="#aaa" stroke-width="1.2"/>
<path d="M1080 655 H1083 L1087 651 V666 L1083 662 H1080Z M1090 654 Q1094 658 1090 663 M1093 652 Q1098 658 1093 665" fill="none" stroke="#ddd"/>
<text x="1107" y="656" style="font-size:10.500px;fill:#ddd">8:03 PM</text>
<text x="1105" y="670" style="font-size:10.500px;fill:#ddd">2/9/2026</text>
<path d="M1165 650 H1178 V663 H1175 L1172 666 V663 H1165Z" fill="none" stroke="#ddd" stroke-width="1.2"/>
<rect x="1196" y="640" width="1" height="35" fill="#444"/>
</svg>
</body></html>
